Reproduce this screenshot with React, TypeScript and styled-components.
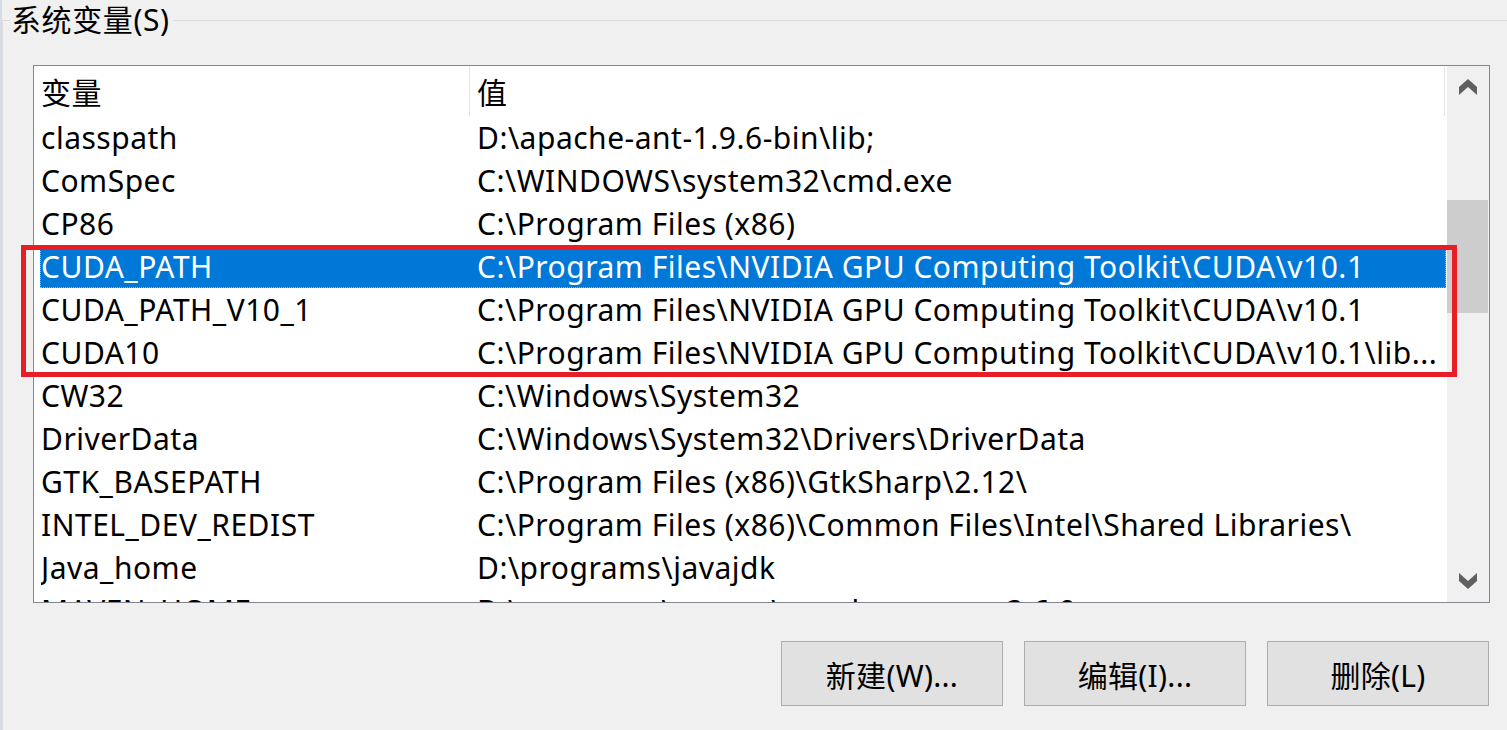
import React from "react";
import styled, { createGlobalStyle } from "styled-components";

const Global = createGlobalStyle`
  html, body { margin: 0; padding: 0; background: #f0f0f0; }
  body {
    font-family: "Noto Sans", "Noto Sans CJK SC", sans-serif;
    color: #000;
    overflow: hidden;
  }
`;

const FONT = `"Noto Sans", "Noto Sans CJK SC", sans-serif`;

const Page = styled.div`
  position: relative;
  display: flex;
  width: 1507px;
  height: 730px;
  background: #f0f0f0;
`;

const Edge = styled.div`
  width: 2px;
  flex: none;
  background: #d6dbe5;
`;

const Group = styled.div`
  flex: 1;
  display: flex;
  flex-direction: column;
`;

const Legend = styled.div`
  display: flex;
  align-items: center;
  height: 40px;
`;

const LegendStub = styled.div`
  align-self: flex-end;
  width: 7px;
  height: 19px;
  border-top: 1px solid #dcdcdc;
  border-left: 1px solid #dcdcdc;
`;

const LegendTitle = styled.div`
  font-family: ${FONT};
  font-size: 30px;
  letter-spacing: 0.6px;
  line-height: 40px;
  padding: 0 3px 0 1px;
  white-space: nowrap;
`;

const LegendLine = styled.div`
  flex: 1;
  height: 1px;
  background: #dcdcdc;
`;

const GroupBody = styled.div`
  flex: 1;
  display: flex;
  flex-direction: column;
  border-left: 1px solid #dcdcdc;
`;

const ListView = styled.div`
  margin: 25px 0 0 30px;
  width: 1457px;
  height: 538px;
  box-sizing: border-box;
  border: 1px solid #828790;
  background: #fff;
  display: flex;
  overflow: hidden;
`;

const ListArea = styled.div`
  flex: 1;
  display: flex;
  flex-direction: column;
  overflow: hidden;
  font-family: ${FONT};
  font-size: 30px;
  letter-spacing: 0.5px;
`;

const Header = styled.div`
  display: grid;
  grid-template-columns: 436px 975px 1fr;
  height: 50px;
  flex: none;
`;

const HeaderCell = styled.div`
  display: flex;
  align-items: center;
  padding-left: 7px;
  border-right: 1px solid #e5e5e5;
  white-space: nowrap;
`;

const Row = styled.div`
  height: 43px;
  flex: none;
  padding-left: 6px;
  padding-right: 1px;
  display: flex;
`;

const Item = styled.div<{ $selected?: boolean }>`
  flex: 1;
  display: grid;
  grid-template-columns: 430px 1fr;
  align-items: center;
  box-sizing: border-box;
  background: ${(p) => (p.$selected ? "#0078d7" : "transparent")};
  color: ${(p) => (p.$selected ? "#fff" : "#000")};
  border: 1px dotted ${(p) => (p.$selected ? "#e0a060" : "transparent")};
  line-height: 41px;
`;

const NameCell = styled.span`
  padding-left: 0;
  white-space: nowrap;
  overflow: hidden;
`;

const ValueCell = styled.span`
  padding-left: 6px;
  white-space: nowrap;
  overflow: hidden;
`;

const ScrollBar = styled.div`
  width: 42px;
  flex: none;
  background: #f0f0f0;
  display: flex;
  flex-direction: column;
`;

const ArrowButton = styled.div`
  height: 42px;
  flex: none;
  display: flex;
  align-items: center;
  justify-content: center;
  padding-right: 1px;
`;

const Track = styled.div`
  flex: 1;
  display: flex;
  flex-direction: column;
`;

const Thumb = styled.div`
  width: 41px;
  background: #cdcdcd;
`;

const ButtonRow = styled.div`
  margin: 38px 0 0 30px;
  width: 1456px;
  display: flex;
  justify-content: flex-end;
  gap: 21px;
`;

const Button = styled.button`
  width: 222px;
  height: 65px;
  box-sizing: border-box;
  background: #e1e1e1;
  border: 1px solid #adadad;
  font-family: ${FONT};
  font-size: 30px;
  letter-spacing: 0.3px;
  color: #000;
  padding: 0;
  display: flex;
  align-items: center;
  justify-content: center;
`;

const Highlight = styled.div`
  position: absolute;
  left: 21px;
  top: 245px;
  width: 1436px;
  height: 132px;
  box-sizing: border-box;
  border: 5px solid #e81d25;
  pointer-events: none;
`;

const Chevron = ({ down }: { down?: boolean }) => (
  <svg width="18" height="16" viewBox="0 0 18 16">
    <polygon
      points="9,0 18,8 18,16 9,8 0,16 0,8"
      fill="#606060"
      transform={down ? "rotate(180 9 8)" : undefined}
    />
  </svg>
);

const CUDA = "C:\\Program Files\\NVIDIA GPU Computing Toolkit\\CUDA\\v10.1";

const rows: { name: string; value: string; selected?: boolean }[] = [
  { name: "classpath", value: "D:\\apache-ant-1.9.6-bin\\lib;" },
  { name: "ComSpec", value: "C:\\WINDOWS\\system32\\cmd.exe" },
  { name: "CP86", value: "C:\\Program Files (x86)" },
  { name: "CUDA_PATH", value: CUDA, selected: true },
  { name: "CUDA_PATH_V10_1", value: CUDA },
  { name: "CUDA10", value: CUDA + "\\lib..." },
  { name: "CW32", value: "C:\\Windows\\System32" },
  { name: "DriverData", value: "C:\\Windows\\System32\\Drivers\\DriverData" },
  { name: "GTK_BASEPATH", value: "C:\\Program Files (x86)\\GtkSharp\\2.12\\" },
  {
    name: "INTEL_DEV_REDIST",
    value: "C:\\Program Files (x86)\\Common Files\\Intel\\Shared Libraries\\",
  },
  { name: "Java_home", value: "D:\\programs\\javajdk" },
  { name: "MAVEN_HOME", value: "D:\\programs\\maven\\apache-maven-3.6.0" },
];

export default function App() {
  return (
    <>
      <Global />
      <Page>
        <Edge />
        <Group>
          <Legend>
            <LegendStub />
            <LegendTitle>系统变量(S)</LegendTitle>
            <LegendLine />
          </Legend>
          <GroupBody>
            <ListView>
              <ListArea>
                <Header>
                  <HeaderCell>变量</HeaderCell>
                  <HeaderCell>值</HeaderCell>
                </Header>
                {rows.map((r) => (
                  <Row key={r.name}>
                    <Item $selected={r.selected}>
                      <NameCell>{r.name}</NameCell>
                      <ValueCell>{r.value}</ValueCell>
                    </Item>
                  </Row>
                ))}
              </ListArea>
              <ScrollBar>
                <ArrowButton>
                  <Chevron />
                </ArrowButton>
                <Track>
                  <Thumb style={{ marginTop: 92, height: 113 }} />
                </Track>
                <ArrowButton>
                  <Chevron down />
                </ArrowButton>
              </ScrollBar>
            </ListView>
            <ButtonRow>
              <Button>新建(W)...</Button>
              <Button>编辑(I)...</Button>
              <Button>删除(L)</Button>
            </ButtonRow>
          </GroupBody>
        </Group>
        <Highlight />
      </Page>
    </>
  );
}
